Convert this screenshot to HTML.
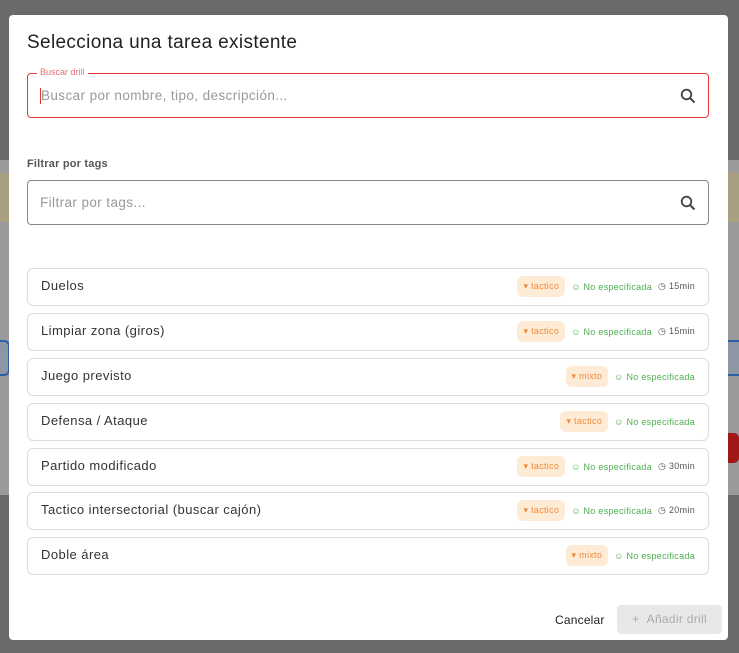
<!DOCTYPE html>
<html><head><meta charset="utf-8"><style>
*{box-sizing:border-box;margin:0;padding:0}
body{width:739px;height:653px;position:relative;overflow:hidden;font-family:"Liberation Sans",sans-serif;background:#6a6a6a}
.bg1{position:absolute;left:0;top:160px;width:739px;height:335px;background:#9a9a9a}
.yel{position:absolute;left:0;top:173px;width:739px;height:49px;background:#a89f80}
.bl{position:absolute;top:340px;width:30px;height:36px;border:2px solid #2a5fa8;border-radius:6px;background:#8d97a3}
.red{position:absolute;left:712px;top:433px;width:27px;height:30px;background:#a01818;border-radius:5px}
.modal{position:absolute;left:9px;top:15px;width:719px;height:625px;background:#fff;border-radius:4px}
h1{position:absolute;left:18px;top:17px;font-size:19px;font-weight:normal;color:#222;letter-spacing:0.35px}
.inp{position:absolute;left:18px;width:682px;height:45px;border:1px solid #888;border-radius:4px}
.inp .ph{position:absolute;left:12px;top:14px;font-size:13.5px;color:#999;letter-spacing:0.4px}
.mag{position:absolute;right:12px;top:14px}
.item{position:absolute;left:18px;width:682px;height:38px;border:1px solid #ddd;border-radius:6px}
.item .n{position:absolute;left:13px;top:9px;font-size:13px;color:#333;letter-spacing:0.45px}
.tags{position:absolute;right:13px;top:7px;display:flex;align-items:center;font-size:9px;height:21px;letter-spacing:0.3px}
.tag{background:#fdebd6;color:#f08a3a;border-radius:6px;padding:0 6px;height:21px;line-height:21px;margin-right:6px}
.ok{color:#4caf50;margin-right:6px}
.tm{color:#555}
</style></head><body>
<div class="bg1"></div><div class="yel"></div>
<div class="bl" style="left:-20px"></div><div class="bl" style="left:718px"></div>
<div class="red"></div>
<div class="modal">
<h1>Selecciona una tarea existente</h1>
<div class="inp" style="top:58px;border-color:#e53935">
<span style="position:absolute;left:9px;top:-7px;background:#fff;padding:0 3px;font-size:9px;color:#e57373">Buscar drill</span>
<span style="position:absolute;left:12px;top:14px;width:1px;height:16px;background:#e53935"></span>
<span class="ph" style="left:13px">Buscar por nombre, tipo, descripción...</span>
<svg class="mag" width="16" height="16" viewBox="0 0 16 16"><circle cx="6.5" cy="6.5" r="4.8" fill="none" stroke="#444" stroke-width="1.8"/><path d="M10 10l4.5 4.5" stroke="#444" stroke-width="2"/></svg>
</div>
<div style="position:absolute;left:18px;top:143px;font-size:11px;font-weight:bold;color:#555;letter-spacing:0.2px">Filtrar por tags</div>
<div class="inp" style="top:165px">
<span class="ph">Filtrar por tags...</span>
<svg class="mag" width="16" height="16" viewBox="0 0 16 16"><circle cx="6.5" cy="6.5" r="4.8" fill="none" stroke="#444" stroke-width="1.8"/><path d="M10 10l4.5 4.5" stroke="#444" stroke-width="2"/></svg>
</div>

<div class="item" style="top:253px"><span class="n">Duelos</span><div class="tags"><span class="tag">▾ tactico</span><span class="ok">☺ No especificada</span><span class="tm">◷ 15min</span></div></div>
<div class="item" style="top:298px"><span class="n">Limpiar zona (giros)</span><div class="tags"><span class="tag">▾ tactico</span><span class="ok">☺ No especificada</span><span class="tm">◷ 15min</span></div></div>
<div class="item" style="top:343px"><span class="n">Juego previsto</span><div class="tags"><span class="tag">▾ mixto</span><span class="ok" style="margin-right:0">☺ No especificada</span></div></div>
<div class="item" style="top:388px"><span class="n">Defensa / Ataque</span><div class="tags"><span class="tag">▾ tactico</span><span class="ok" style="margin-right:0">☺ No especificada</span></div></div>
<div class="item" style="top:433px"><span class="n">Partido modificado</span><div class="tags"><span class="tag">▾ tactico</span><span class="ok">☺ No especificada</span><span class="tm">◷ 30min</span></div></div>
<div class="item" style="top:477px"><span class="n">Tactico intersectorial (buscar cajón)</span><div class="tags"><span class="tag">▾ tactico</span><span class="ok">☺ No especificada</span><span class="tm">◷ 20min</span></div></div>
<div class="item" style="top:522px"><span class="n">Doble área</span><div class="tags"><span class="tag">▾ mixto</span><span class="ok" style="margin-right:0">☺ No especificada</span></div></div>

<div style="position:absolute;left:546px;top:598px;font-size:12px;color:#222;letter-spacing:0.2px">Cancelar</div>
<div style="position:absolute;left:608px;top:590px;width:105px;height:29px;background:#e8e8e8;border-radius:4px;color:#aaa;font-size:12px;line-height:29px;text-align:center;letter-spacing:0.3px">+&nbsp;&nbsp;Añadir drill</div>
</div>
</body></html>
